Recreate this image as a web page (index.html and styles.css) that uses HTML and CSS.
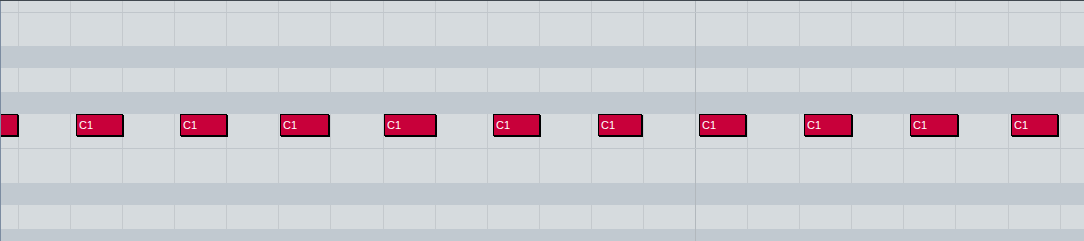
FILE: index.html
```html
<!DOCTYPE html>
<html>
<head>
<meta charset="utf-8">
<link rel="stylesheet" href="styles.css">
</head>
<body>
<div class="editor">
  <div class="lanes" id="lanes">
    <div class="row light h11"></div>
    <div class="hline"></div>
    <div class="row light h33"></div>
    <div class="row band h22"></div>
    <div class="row light h24"></div>
    <div class="row band h22"></div>
    <div class="row light h34 notes">
      <div class="note" style="left:-40px;width:57px"></div>
      <div class="note" style="left:75px;width:47px"><span>C1</span></div>
      <div class="note" style="left:179px;width:47px"><span>C1</span></div>
      <div class="note" style="left:279px;width:49px"><span>C1</span></div>
      <div class="note" style="left:383px;width:52px"><span>C1</span></div>
      <div class="note" style="left:492px;width:47px"><span>C1</span></div>
      <div class="note" style="left:597px;width:44px"><span>C1</span></div>
      <div class="note" style="left:698px;width:47px"><span>C1</span></div>
      <div class="note" style="left:803px;width:48px"><span>C1</span></div>
      <div class="note" style="left:909px;width:48px"><span>C1</span></div>
      <div class="note" style="left:1010px;width:47px"><span>C1</span></div>
    </div>
    <div class="hline"></div>
    <div class="row light h34"></div>
    <div class="row band h22"></div>
    <div class="row light h24"></div>
    <div class="row band h12"></div>
  </div>
</div>
<script src="script.js"></script>
</body>
</html>
```
FILE: styles.css
```css
html, body {
  margin: 0;
  padding: 0;
  background: #d6dbde;
  font-family: "Liberation Sans", Arial, sans-serif;
}
.editor {
  width: 1084px;
  height: 241px;
  border-top: 1px solid #40484f;
  box-sizing: border-box;
  overflow: hidden;
  background: #d6dbde;
}
.lanes {
  display: flex;
  flex-direction: column;
  height: 240px;
  border-left: 1px solid #7c8ca1;
  overflow: hidden;
}
.row {
  display: flex;
  flex: none;
  position: relative;
}
.light { background: #d6dbde; }
.band { background: #c1c9d0; }
.h11 { height: 11px; }
.h12 { height: 12px; }
.h22 { height: 22px; }
.h24 { height: 24px; }
.h33 { height: 33px; }
.h34 { height: 34px; }
.hline {
  flex: none;
  height: 1px;
  background: #c0c6cb;
}
.seg {
  flex: none;
  height: 100%;
  box-sizing: border-box;
}
.seg.beat { border-left: 1px solid #c4c9cd; }
.seg.bar { border-left: 1px solid #b2b8bd; }
.band .seg.beat { border-left-color: transparent; }
.note {
  position: absolute;
  top: 0;
  height: 22px;
  box-sizing: border-box;
  background: #c8003a;
  border: 1px solid #000;
  box-shadow: 1px 1px 0 #000;
  color: #fff;
  font-size: 11px;
  line-height: 20px;
  padding-left: 2px;
  white-space: nowrap;
  overflow: hidden;
  z-index: 1;
}
```
FILE: script.js
```js
(function () {
  var xs = [];
  for (var i = 0; i < 21; i++) xs.push(Math.round(18 + i * 52.083) - 1);
  var total = 1083;
  var rows = document.querySelectorAll('.row');
  rows.forEach(function (row) {
    var frag = document.createDocumentFragment();
    var first = document.createElement('div');
    first.className = 'seg';
    first.style.width = xs[0] + 'px';
    frag.appendChild(first);
    for (var i = 0; i < xs.length; i++) {
      var next = i + 1 < xs.length ? xs[i + 1] : total;
      var seg = document.createElement('div');
      seg.className = 'seg ' + (i === 13 ? 'bar' : 'beat');
      seg.style.width = (next - xs[i]) + 'px';
      frag.appendChild(seg);
    }
    row.insertBefore(frag, row.firstChild);
  });
})();
```
